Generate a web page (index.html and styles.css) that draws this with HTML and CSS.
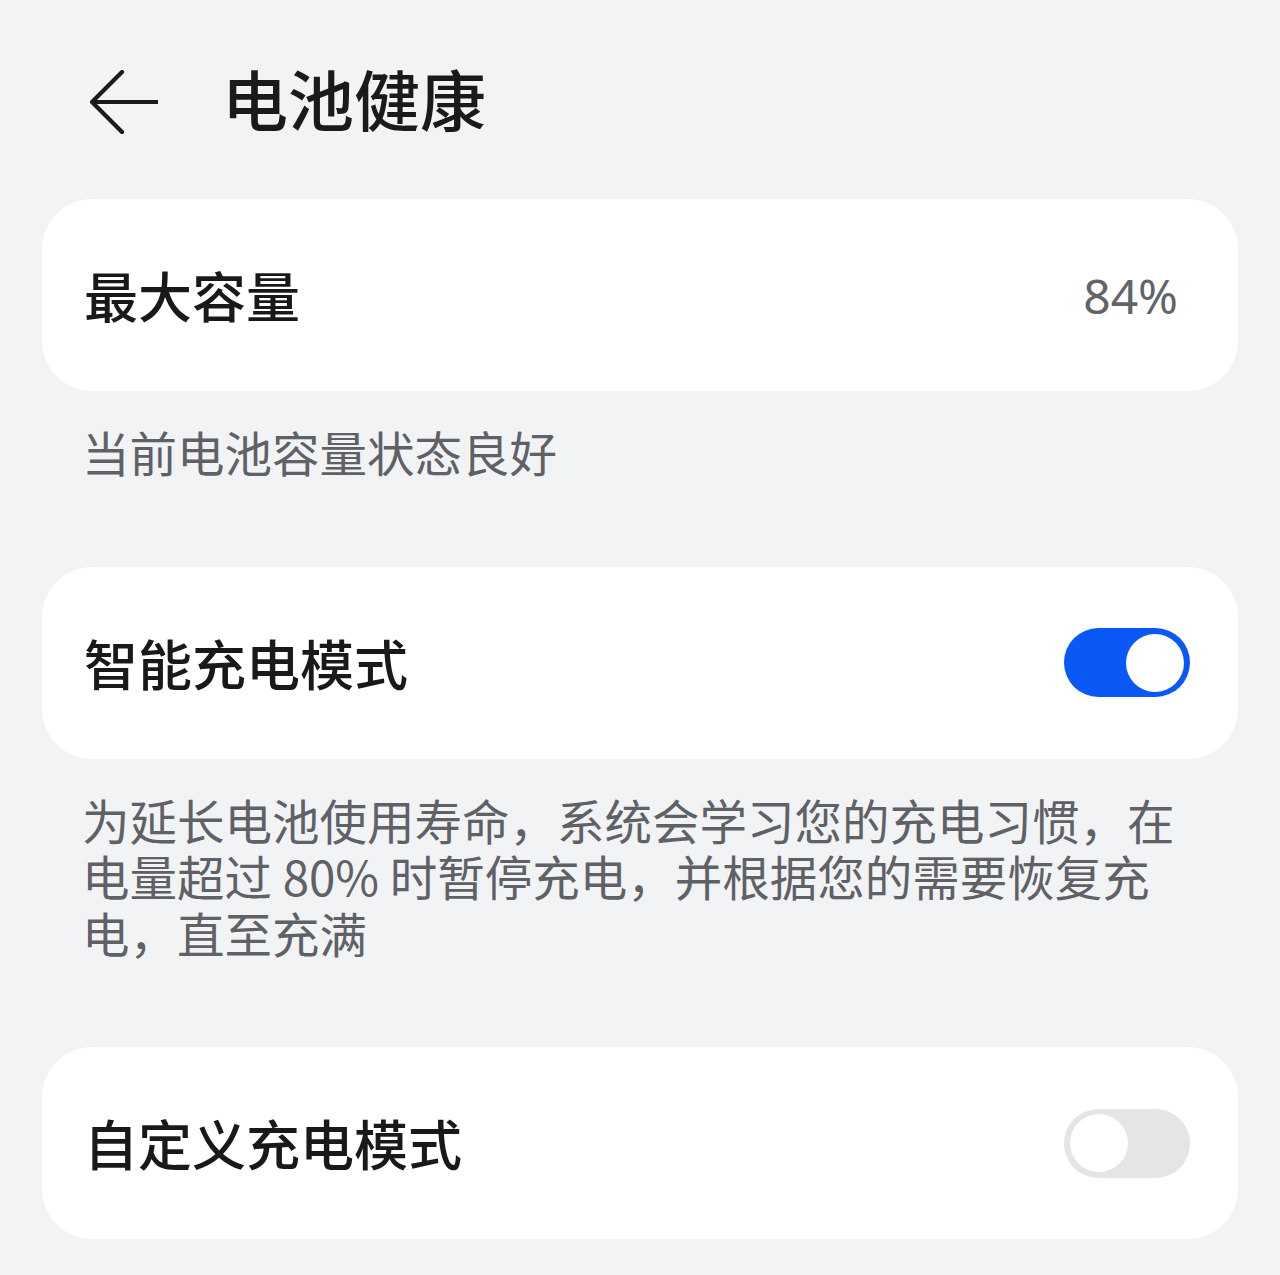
FILE: index.html
```html
<!DOCTYPE html>
<html lang="zh-CN">
<head>
<meta charset="utf-8">
<title>电池健康</title>
<link rel="stylesheet" href="styles.css">
</head>
<body>
<div class="page">
  <header class="header">
    <svg class="back" width="68" height="64" viewBox="0 0 68 64" aria-hidden="true">
      <path d="M32 2 L2 32 L32 62 M2 32 H67" fill="none" stroke="#1a1a1a" stroke-width="4.2" stroke-linecap="round" stroke-linejoin="round"/>
    </svg>
    <h1 class="title">电池健康</h1>
  </header>

  <section class="card">
    <span class="label">最大容量</span>
    <span class="value">84%</span>
  </section>
  <p class="caption">当前电池容量状态良好</p>

  <section class="card">
    <span class="label">智能充电模式</span>
    <span class="switch on"><span class="knob"></span></span>
  </section>
  <p class="caption">为延长电池使用寿命，系统会学习您的充电习惯，在<br>电量超过 80% 时暂停充电，并根据您的需要恢复充<br>电，直至充满</p>

  <section class="card">
    <span class="label">自定义充电模式</span>
    <span class="switch off"><span class="knob"></span></span>
  </section>
</div>
</body>
</html>
```

FILE: styles.css
```css
html, body {
  margin: 0;
  padding: 0;
  background: #f1f3f5;
}

body {
  font-family: "Noto Sans CJK SC", "Noto Sans", sans-serif;
  color: #191919;
}

.page {
  width: 1280px;
  min-height: 1275px;
  padding: 0 42px;
  box-sizing: border-box;
}

.header {
  height: 199px;
  box-sizing: border-box;
  padding: 0 0 6px 48px;
  display: flex;
  align-items: center;
  gap: 64px;
}

.back {
  display: block;
  flex: none;
  margin-top: 11px;
}

.title {
  margin: 0;
  font-size: 66px;
  font-weight: 500;
  line-height: 1;
  color: #1a1a1a;
}

.card {
  height: 192px;
  background: #ffffff;
  border-radius: 50px;
  display: flex;
  align-items: center;
  justify-content: space-between;
  padding: 0 48px 0 42px;
  box-sizing: border-box;
}

.label {
  font-size: 54px;
  font-weight: 500;
  line-height: 1;
}

.value {
  font-size: 48px;
  color: #626469;
  margin-right: 12px;
  font-family: "Noto Sans", "Noto Sans CJK SC", sans-serif;
}

.caption {
  margin: 0;
  padding: 33px 0 86px 40px;
  font-size: 47.5px;
  line-height: 56.5px;
  color: #5f6166;
}

.switch {
  position: relative;
  width: 126px;
  height: 69px;
  border-radius: 35px;
  flex: none;
}

.switch.on {
  background: #0a59f7;
}

.switch.off {
  background: #e5e5e6;
}

.knob {
  position: absolute;
  top: 5.5px;
  width: 58px;
  height: 58px;
  border-radius: 50%;
  background: #ffffff;
}

.switch.on .knob {
  right: 6px;
}

.switch.off .knob {
  left: 6px;
}
```
